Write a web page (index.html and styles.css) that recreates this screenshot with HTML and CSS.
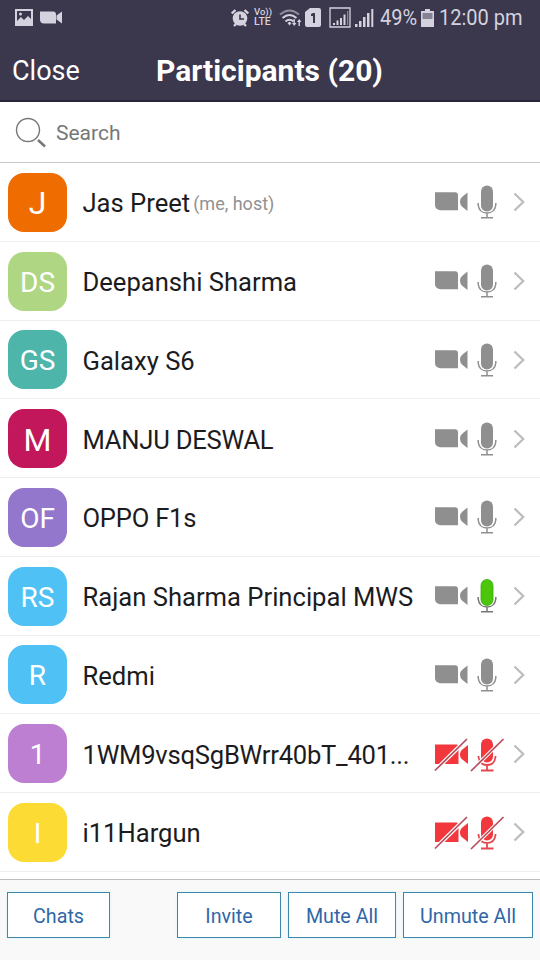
FILE: index.html
```html
<!DOCTYPE html>
<html lang="en">
<head>
<meta charset="utf-8">
<title>Participants</title>
<link rel="stylesheet" href="styles.css">
</head>
<body>
<svg class="defs" aria-hidden="true">
  <symbol id="cam" viewBox="0 0 34 22"><path d="M1 1.300h20q3 0 3 3v15H6q-5-1-5-5zM33.500 1.500v18.500l-5-4Q26 14 26 10.700t2.500-5.200z"/></symbol>
  <symbol id="mic" viewBox="0 0 20 36"><rect x="4" y="1.500" width="12" height="26" rx="6"/><path d="M1.200 19v2q1 8 8.800 8t8.800-8v-2M10 29v4.500M4 33.700h12" fill="none" stroke="currentColor" stroke-width="1.500"/></symbol>
  <symbol id="talk" viewBox="0 0 20 36"><rect x="4" y="1.500" width="12" height="26" rx="6" fill="#4bc60a" stroke="#35a900" stroke-width=".8"/><path d="M1.200 19v2q1 8 8.800 8t8.800-8v-2M10 29v4.500M4 33.700h12" fill="none" stroke="#777" stroke-width="1.500"/></symbol>
  <symbol id="cam-off" viewBox="0 0 36 36"><path d="M1 8.500h21.500q2 0 2 2V28H1zM34 9v19l-5-4q-3-2-3-5.500t3-5.500z" fill="#f2383c"/><path d="M1 34.500 33 3" stroke="#fff" stroke-width="4"/><path d="M1 34.500 33 3" stroke="#b94c5b" stroke-width="1.700"/></symbol>
  <symbol id="mic-off" viewBox="0 0 36 36"><rect x="11" y="2.500" width="12" height="24" rx="6" fill="#f2383c"/><path d="M8.500 20v1q1 8 8.500 8t8.500-8v-1M17 29v5M11 34.500h12.500" fill="none" stroke="#e34850" stroke-width="1.800"/><path d="M1 35 33.500 3" stroke="#fff" stroke-width="3.600"/><path d="M1 35 33.500 3" stroke="#b94c5b" stroke-width="1.700"/></symbol>
  <symbol id="chev" viewBox="0 0 12 20"><path d="m1.500 1.500 8.700 8.500-8.700 8.500" fill="none" stroke="#bdbdbd" stroke-width="2.300"/></symbol>
</svg>
<header class="top">
  <div class="status">
    <svg class="s-pic" viewBox="0 0 18 17"><path fill-rule="evenodd" d="M0 0h18v17H0zM2 2v10l4-4 3 3 4-4 3 3V2z"/><circle cx="5.500" cy="5" r="1.500"/></svg>
    <svg class="s-cam" viewBox="0 0 22 13"><path d="M0 .5h13q3 0 3 3v9H4q-4 0-4-4zM22 .5v12l-5.500-4v-4z"/></svg>
    <svg class="s-alarm" viewBox="0 0 18 18"><circle cx="9" cy="9.500" r="7.300"/><path d="M.8 4.500 4.500 1M17.200 4.500 13.500 1M3 17l2-2m10 2-2-2" stroke="#d4d2df" stroke-width="2.400"/><path d="M9 5.500v4.500h4" fill="none" stroke="#3b374c" stroke-width="1.600"/></svg>
    <span class="volte"><span class="vo">Vo))</span><span class="lte">LTE</span></span>
    <svg class="s-wifi" viewBox="0 0 24 18"><g fill="none" stroke="#d4d2df" stroke-width="2"><path d="M1 5.500q9.500-8 19 0" opacity=".55"/><path d="M3.500 9q7-6 14 0M6.500 12.500q4-3.500 8 0"/></g><path d="m8.500 14 2-1.200 2 1.200-2 2.500zM13 14h1.500v-4h1.400v4h1.500l-2.200 3zM18 13h1.500v4h1.400v-4h1.500l-2.200-3z"/></svg>
    <svg class="s-sim" viewBox="0 0 16 19"><path fill-rule="evenodd" d="M5 0h9q2 0 2 2v15q0 2-2 2H2q-2 0-2-2V4zM6 6v2h2v7h2V5H8z"/></svg>
    <svg class="s-sig1" viewBox="0 0 22 21"><path d="M1 1h20v19H1z" fill="none" stroke="#d4d2df" stroke-width="1.300"/><path d="M4 16h2v2H4zM7.500 13.500h2V18h-2zM11 11h2v7h-2zM14.500 7.500h2V18h-2z"/><path d="M18 4h1.300v14H18z" opacity=".5"/></svg>
    <svg class="s-sig2" viewBox="0 0 19 18"><path d="M0 15h2.500v3H0zM4 12h2.500v6H4zM8 8h2.500v10H8zM12 4h2.500v14H12zM16.300 0h2v18h-2z"/></svg>
    <span class="pct">49%</span>
    <svg class="s-bat" viewBox="0 0 13 18"><path d="M4 0h5v2h4v16H0V2h4z"/><path d="M1.500 4h10v6h-10z" fill="#858293"/></svg>
    <span class="clock">12:00 pm</span>
  </div>
  <div class="nav"><span class="close">Close</span><h1>Participants (20)</h1><span></span></div>
</header>
<div class="search"><svg viewBox="0 0 32 32"><circle cx="13" cy="13" r="11.500" fill="none" stroke="#777" stroke-width="1.400"/><path d="m23 23 7 6.500" stroke="#777" stroke-width="2.500"/></svg><span>Search</span></div>
<main>
  <div class="row"><div class="avatar one orange">J</div><div class="name">Jas Preet<small>(me, host)</small></div><svg class="cam"><use href="#cam"/></svg><svg class="mic"><use href="#mic"/></svg><svg class="chev"><use href="#chev"/></svg></div>
  <div class="row"><div class="avatar lime">DS</div><div class="name">Deepanshi Sharma</div><svg class="cam"><use href="#cam"/></svg><svg class="mic"><use href="#mic"/></svg><svg class="chev"><use href="#chev"/></svg></div>
  <div class="row"><div class="avatar teal">GS</div><div class="name">Galaxy S6</div><svg class="cam"><use href="#cam"/></svg><svg class="mic"><use href="#mic"/></svg><svg class="chev"><use href="#chev"/></svg></div>
  <div class="row"><div class="avatar one pink">M</div><div class="name tight">MANJU DESWAL</div><svg class="cam"><use href="#cam"/></svg><svg class="mic"><use href="#mic"/></svg><svg class="chev"><use href="#chev"/></svg></div>
  <div class="row"><div class="avatar violet">OF</div><div class="name tight">OPPO F1s</div><svg class="cam"><use href="#cam"/></svg><svg class="mic"><use href="#mic"/></svg><svg class="chev"><use href="#chev"/></svg></div>
  <div class="row"><div class="avatar sky">RS</div><div class="name">Rajan Sharma Principal MWS</div><svg class="cam"><use href="#cam"/></svg><svg class="mic"><use href="#talk"/></svg><svg class="chev"><use href="#chev"/></svg></div>
  <div class="row"><div class="avatar sky">R</div><div class="name">Redmi</div><svg class="cam"><use href="#cam"/></svg><svg class="mic"><use href="#mic"/></svg><svg class="chev"><use href="#chev"/></svg></div>
  <div class="row"><div class="avatar mauve">1</div><div class="name tight">1WM9vsqSgBWrr40bT_401...</div><svg class="off"><use href="#cam-off"/></svg><svg class="off"><use href="#mic-off"/></svg><svg class="chev"><use href="#chev"/></svg></div>
  <div class="row"><div class="avatar yellow">I</div><div class="name">i11Hargun</div><svg class="off"><use href="#cam-off"/></svg><svg class="off"><use href="#mic-off"/></svg><svg class="chev"><use href="#chev"/></svg></div>
</main>
<footer><button class="chats">Chats</button><button class="invite">Invite</button><button class="mute">Mute All</button><button class="unmute">Unmute All</button></footer>
</body>
</html>
```
FILE: styles.css
```css
* { box-sizing: border-box; }
body { margin: 0; width: 540px; height: 960px; overflow: hidden; display: flex; flex-direction: column; background: #fff; font-family: Roboto, sans-serif; color: #1c1c1f; }
svg { display: block; flex: none; }
.defs { width: 0; height: 0; position: absolute; }
.top { height: 102px; background: #3b374c; border-bottom: 2px solid #292538; color: #fff; flex: none; }
.status { height: 35px; display: flex; align-items: center; fill: #d4d2df; color: #d4d2df; white-space: nowrap; }
.s-pic { width: 18px; height: 17px; margin-left: 15px; }
.s-cam { width: 22px; height: 13px; margin-left: 7px; }
.s-alarm { width: 18px; height: 18px; margin-left: 169px; }
.volte { width: 18px; margin-left: 5px; display: flex; flex-direction: column; font-weight: 500; }
.vo { font-size: 9.500px; line-height: 8px; }
.lte { font-size: 10.500px; line-height: 11px; }
.s-wifi { width: 24px; height: 18px; margin-left: 7px; }
.s-sim { width: 16px; height: 19px; margin-left: 2px; }
.s-sig1 { width: 22px; height: 21px; margin-left: 8px; }
.s-sig2 { width: 19px; height: 18px; margin-left: 4px; }
.pct, .clock { font-size: 22px; line-height: 35px; transform: scaleX(.91); transform-origin: left; flex: none; }
.pct { width: 36px; margin-left: 6px; }
.s-bat { width: 13px; height: 18px; margin-left: 5px; }
.clock { width: 84px; margin-left: 5px; }
.nav { height: 65px; padding: 0 12px; display: grid; grid-template-columns: 1fr auto 1fr; align-items: center; line-height: 72px; }
.close { font-size: 27px; }
h1 { font-size: 30px; font-weight: 700; margin: 0 0 0 -1px; line-height: 72px; }
.search { height: 61px; flex: none; display: flex; align-items: center; border-bottom: 1px solid #c8c8c8; color: #777; font-size: 21px; padding: 1px 0 0 15px; }
.search svg { width: 32px; height: 32px; margin-right: 9px; }
main { flex: none; height: 716px; }
.row { height: 78.750px; display: flex; align-items: center; border-bottom: 1px solid #eee; padding: 1px 15px 0 8px; }
.avatar { width: 59px; height: 59px; border-radius: 16px; color: #fff; font-size: 28px; display: flex; align-items: center; justify-content: center; flex: none; padding-top: 2px; }
.one { font-size: 32px; }
.orange { background: #ee6c00; }
.lime { background: #afd682; }
.teal { background: #4db5aa; }
.pink { background: #c3175c; }
.violet { background: #9377cd; }
.sky { background: #4fc1f5; }
.mauve { background: #bd7fd1; }
.yellow { background: #fcdc34; }
.name { flex: 1; min-width: 0; margin-left: 15.500px; font-size: 25.600px; white-space: nowrap; padding-top: 2px; }
.tight { letter-spacing: -.24px; }
.name small { font-size: 18px; color: #919191; margin-left: 3px; vertical-align: 2px; }
.cam { width: 34px; height: 22px; fill: #8f8f8f; }
.mic { width: 20px; height: 36px; margin: 0 16px 0 9px; fill: #8f8f8f; color: #8f8f8f; }
.off { width: 36px; height: 36px; }
.off + .chev { margin-left: 7px; }
.chev { width: 12px; height: 20px; }
footer { flex: 1; background: #f9f9f9; border-top: 1px solid #bcbcbc; display: flex; align-items: flex-start; gap: 7px; padding: 12px 7px 0; }
button { height: 46px; padding: 2px 0 0; background: #fff; border: 1px solid #3f87a9; box-shadow: 0 0 3px #d5f5ff; color: #2f67a8; font: 19.700px Roboto, sans-serif; flex: none; }
.chats { width: 103px; margin-right: auto; }
.invite { width: 104px; }
.mute { width: 108px; }
.unmute { width: 130px; }
```
